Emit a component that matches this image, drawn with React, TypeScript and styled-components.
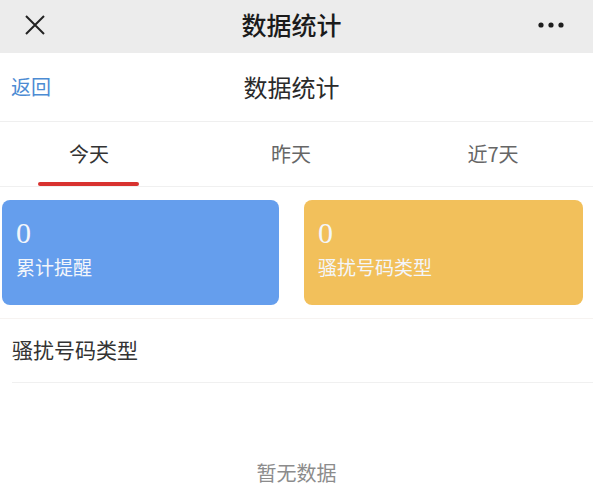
import React from "react";
import styled, { createGlobalStyle } from "styled-components";

const Global = createGlobalStyle`
  html, body { margin: 0; padding: 0; background: #fff; }
  body { font-family: "Noto Sans CJK SC", "Noto Sans", sans-serif; }
`;

const Page = styled.div`
  width: 593px;
  height: 500px;
  overflow: hidden;
  background: #fff;
`;

const TopBar = styled.div`
  height: 53px;
  background: #ececec;
  display: grid;
  grid-template-columns: 70px 1fr 80px;
  align-items: center;
`;

const TopTitle = styled.div`
  text-align: center;
  font-size: 25px;
  font-weight: 500;
  color: #1b1b1b;
  line-height: 1;
  margin-top: -5px;
`;

const IconCell = styled.div<{ $align: "start" | "end" }>`
  display: flex;
  justify-content: ${(p) => (p.$align === "start" ? "flex-start" : "flex-end")};
  padding: ${(p) => (p.$align === "start" ? "0 0 0 24px" : "0 28px 0 0")};
  margin-top: -4px;
`;

const Header = styled.div`
  height: 68px;
  border-bottom: 1px solid #efefef;
  display: grid;
  grid-template-columns: 70px 1fr 80px;
  align-items: center;
`;

const Back = styled.div`
  padding-left: 11px;
  font-size: 20px;
  color: #4c8bd3;
  line-height: 1;
`;

const HeaderTitle = styled.div`
  text-align: center;
  font-size: 24px;
  color: #2a2a2a;
  line-height: 1;
`;

const Tabs = styled.div`
  height: 64px;
  border-bottom: 1px solid #f0f0f0;
  display: grid;
  grid-template-columns: repeat(3, 202px);
  margin-left: -12px;
`;

const Tab = styled.div<{ $active?: boolean }>`
  position: relative;
  display: flex;
  justify-content: center;
  align-items: center;
  padding-bottom: 2px;
  font-size: 20px;
  color: ${(p) => (p.$active ? "#333" : "#666")};
  &::after {
    content: "";
    display: ${(p) => (p.$active ? "block" : "none")};
    position: absolute;
    left: 50px;
    width: 101px;
    bottom: 0px;
    height: 4px;
    border-radius: 2px;
    background: #d8322f;
  }
`;

const Cards = styled.div`
  display: grid;
  grid-template-columns: 277px 279px;
  gap: 25px;
  padding: 13px 0 13px 2px;
  border-bottom: 1px solid #f6f3f1;
`;

const Card = styled.div<{ $bg: string }>`
  height: 105px;
  border-radius: 8px;
  background: ${(p) => p.$bg};
  padding: 18px 14px 0 14px;
  box-sizing: border-box;
  color: #f3f6fb;
`;

const Count = styled.div`
  font-family: "Liberation Serif", serif;
  font-size: 30px;
  line-height: 30px;
  height: 30px;
`;

const CardLabel = styled.div`
  margin-top: 7px;
  font-size: 19px;
  line-height: 24px;
`;

const SectionRow = styled.div`
  margin-left: 12px;
  height: 64px;
  border-bottom: 1px solid #f0f0f0;
  display: flex;
  align-items: center;
  font-size: 21px;
  color: #333;
  padding-bottom: 4px;
  box-sizing: border-box;
`;

const Empty = styled.div`
  height: 118px;
  display: flex;
  align-items: flex-end;
  justify-content: center;
  font-size: 20px;
  color: #8c8c8c;
  line-height: 1;
  padding-bottom: 18px;
  box-sizing: border-box;
`;

const CloseIcon = () => (
  <svg width="22" height="22" viewBox="0 0 22 22">
    <path d="M2 2 L20 20 M20 2 L2 20" stroke="#222" strokeWidth="2" fill="none" />
  </svg>
);

const MoreIcon = () => (
  <svg width="28" height="8" viewBox="0 0 28 8">
    <circle cx="4" cy="4" r="2.6" fill="#1e1e1e" />
    <circle cx="14" cy="4" r="2.6" fill="#1e1e1e" />
    <circle cx="24" cy="4" r="2.6" fill="#1e1e1e" />
  </svg>
);

export default function App() {
  return (
    <Page>
      <Global />
      <TopBar>
        <IconCell $align="start">
          <CloseIcon />
        </IconCell>
        <TopTitle>数据统计</TopTitle>
        <IconCell $align="end">
          <MoreIcon />
        </IconCell>
      </TopBar>
      <Header>
        <Back>返回</Back>
        <HeaderTitle>数据统计</HeaderTitle>
        <div />
      </Header>
      <Tabs>
        <Tab $active>今天</Tab>
        <Tab>昨天</Tab>
        <Tab>近7天</Tab>
      </Tabs>
      <Cards>
        <Card $bg="#659eed">
          <Count>0</Count>
          <CardLabel>累计提醒</CardLabel>
        </Card>
        <Card $bg="#f2c05b">
          <Count>0</Count>
          <CardLabel>骚扰号码类型</CardLabel>
        </Card>
      </Cards>
      <SectionRow>骚扰号码类型</SectionRow>
      <Empty>暂无数据</Empty>
    </Page>
  );
}
